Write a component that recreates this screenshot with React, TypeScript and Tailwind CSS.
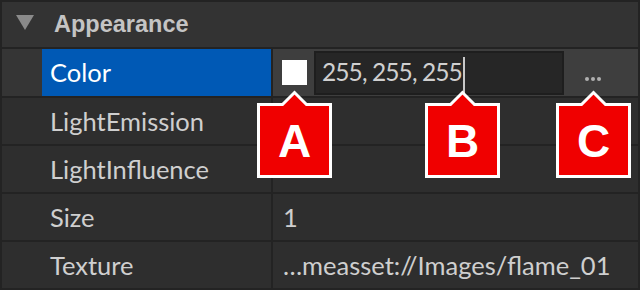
import React from "react";

const font = { fontFamily: "Lato, 'Noto Sans', sans-serif" };

function Callout({ letter, left }: { letter: string; left: number }) {
  return (
    <div className="pointer-events-none absolute top-[90px] h-[88px] w-[75px]" style={{ left }}>
      <svg width="75" height="88" viewBox="0 0 75 88" className="absolute inset-0">
        <path
          d="M1.5 14.5 H25.5 L37.5 2.5 L49.5 14.5 H73.5 V86.5 H1.5 Z"
          fill="#f00000"
          stroke="#ffffff"
          strokeWidth="3"
          strokeLinejoin="miter"
        />
      </svg>
      <div
        className="absolute left-0 right-0 top-[13px] bottom-0 flex items-center justify-center text-[46px] font-bold leading-none text-white"
        style={{ fontFamily: "'Liberation Sans', Arial, sans-serif" }}
      >
        {letter}
      </div>
    </div>
  );
}

function Row({ name, value }: { name: string; value?: string }) {
  return (
    <div className="flex h-[46px] gap-[2px]">
      <div className="flex w-[269px] items-center bg-[#2e2e2e] pl-[48px] text-[25.5px] text-[#cfcfcf]">
        {name}
      </div>
      <div className="flex flex-1 items-center bg-[#2e2e2e] pl-[10px] text-[25.5px] text-[#cfcfcf]">
        {value}
      </div>
    </div>
  );
}

export default function App() {
  return (
    <div className="relative h-[290px] w-[640px] overflow-hidden bg-[#232323] p-[2px]" style={font}>
      <div className="flex flex-col gap-[2px]">
        {/* section header */}
        <div className="flex h-[45px] items-center bg-[#333333]">
          <svg width="18" height="15" viewBox="0 0 18 15" className="ml-[14px] mt-[-4px]">
            <path d="M0 0 H18 L9 15 Z" fill="#8a8a8a" />
          </svg>
          <span
            className="ml-[20px] text-[23.5px] font-bold text-[#c4c4c4]"
            style={{ fontFamily: "'Liberation Sans', Arial, sans-serif" }}
          >
            Appearance
          </span>
        </div>

        {/* selected Color row */}
        <div className="flex h-[47px] gap-[2px]">
          <div className="flex w-[269px] bg-[#353535]">
            <div className="w-[40px]" />
            <div className="flex flex-1 items-center bg-[#0059b5] pl-[8px] text-[25.5px] text-white">Color</div>
          </div>
          <div className="flex flex-1 items-center bg-[#3e3e3e]">
            <div className="ml-[9px] h-[25px] w-[25px] bg-white" />
            <div className="ml-[7px] flex h-[44px] w-[250px] items-center border-2 border-[#1e1e1e] bg-[#262626] pl-[6px] text-[24.5px] tracking-[-0.9px] text-[#d0d0d0]">
              255, 255, 255
              <span className="ml-[1px] h-[36px] w-[2px] translate-y-[2px] bg-[#c8c8c8]" />
            </div>
            <div className="ml-[21px] mt-[13px] flex gap-[2.5px]">
              <span className="h-[3.5px] w-[3.5px] rounded-full bg-[#b0b0b0]" />
              <span className="h-[3.5px] w-[3.5px] rounded-full bg-[#b0b0b0]" />
              <span className="h-[3.5px] w-[3.5px] rounded-full bg-[#b0b0b0]" />
            </div>
          </div>
        </div>

        <Row name="LightEmission" />
        <Row name="LightInfluence" />
        <Row name="Size" value="1" />
        <Row name="Texture" value="…measset://Images/flame_01" />
      </div>

      <Callout letter="A" left={257} />
      <Callout letter="B" left={425} />
      <Callout letter="C" left={556} />
    </div>
  );
}
